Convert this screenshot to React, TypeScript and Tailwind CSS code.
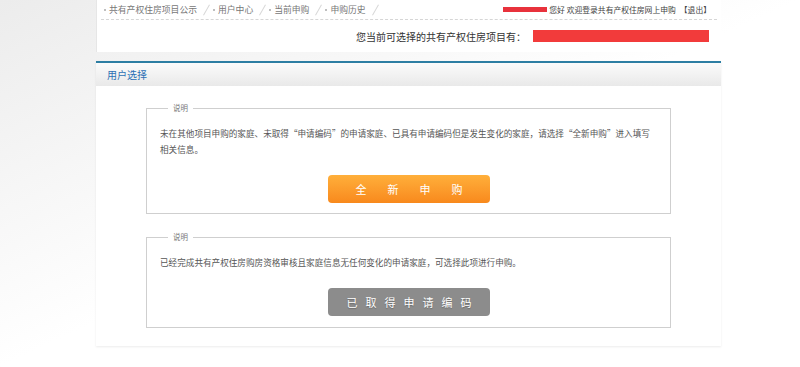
import React from "react";

// ─── Copy ─────────────────────────────────────────────────────────────────────

const navItems = ["共有产权住房项目公示", "用户中心", "当前申购", "申购历史"];

const copy = {
  welcome: "您好 欢迎登录共有产权住房网上申购",
  logout: "【退出】",
  projects: "您当前可选择的共有产权住房项目有：",
  panelTitle: "用户选择",
  legend: "说明",
  newDesc:
    "未在其他项目申购的家庭、未取得“申请编码”的申请家庭、已具有申请编码但是发生变化的家庭，请选择“全新申购”进入填写相关信息。",
  newBtn: "全新申购",
  codeDesc: "已经完成共有产权住房购房资格审核且家庭信息无任何变化的申请家庭，可选择此项进行申购。",
  codeBtn: "已取得申请编码",
};

const font = "font-['Noto_Sans_CJK_SC','Noto_Sans',sans-serif]";

// ─── Option box ───────────────────────────────────────────────────────────────

function OptionBox({ desc, button, variant, className = "" }: { desc: string; button: string; variant: "orange" | "gray"; className?: string }) {
  const btn =
    variant === "orange"
      ? "bg-gradient-to-b from-[#ffaf3a] to-[#f8891c] tracking-[21px] pl-[21px]"
      : "bg-[#8c8c8c] tracking-[8px] pl-[8px] [text-shadow:0_1px_1px_rgba(0,0,0,0.25)]";
  return (
    <fieldset className={`mx-[50px] border border-[#cfcfcf] pl-[13px] pr-[12px] ${className}`}>
      <legend className="ml-[8px] px-[5px] text-[7.5px] leading-[10px] text-[#777]">{copy.legend}</legend>
      <p className="mt-[12px] text-[8.6px] leading-[16px] text-[#555]">{desc}</p>
      <div className="mt-[18px] flex justify-center">
        <button
          className={`flex h-[28px] w-[162px] items-center justify-center rounded-[4px] text-[11px] text-white ${btn}`}
        >
          {button}
        </button>
      </div>
    </fieldset>
  );
}

// ─── Page ─────────────────────────────────────────────────────────────────────

export default function App() {
  return (
    <div className={`relative h-[367px] w-[800px] overflow-hidden bg-gradient-to-br from-[#ececec] via-white to-white ${font}`}>
      <div className="ml-[96px] w-[625px]">
        {/* Top bar */}
        <div className="h-[52px] border-l border-[#e6e6e6] bg-white">
          <div className="mx-[4px] flex h-[20px] items-center justify-between border-b border-dashed border-[#d6d6d6] pl-[3px]">
            <ul className="flex items-center text-[8.8px] text-[#777]">
              {navItems.map((item) => (
                <li key={item} className="flex items-center">
                  <span className="mr-[3px] h-[2px] w-[2px] rounded-full bg-[#aaa]" />
                  {item}
                  <span className="ml-[9px] mr-[6px] h-[12px] w-px rotate-[30deg] bg-[#d8d8d8]" />
                </li>
              ))}
            </ul>
            <div className="flex items-center pr-[6px] text-[7.8px] text-[#444]">
              <span className="mr-[2px] h-[5px] w-[44px] bg-[#e8323c]" />
              {copy.welcome}
              <span className="ml-[4px]">{copy.logout}</span>
            </div>
          </div>
          <div className="flex h-[32px] items-center justify-end pr-[12px] text-[10px] text-[#333]">
            {copy.projects}
            <span className="ml-[7px] h-[12px] w-[176px] bg-[#f23b3b]" />
          </div>
        </div>

        {/* Panel */}
        <div className="mt-[9px] h-[285px] border-t-2 border-[#2d7ea3] bg-white shadow-[0_1px_2px_rgba(0,0,0,0.08)]">
          <div className="flex h-[23px] items-center bg-gradient-to-b from-[#fbfbfb] to-[#e9e9e9] pl-[11px] text-[10px] text-[#2c6fb4]">
            {copy.panelTitle}
          </div>
          <div className="pt-[17px]">
            <OptionBox desc={copy.newDesc} button={copy.newBtn} variant="orange" className="h-[111px]" />
            <OptionBox desc={copy.codeDesc} button={copy.codeBtn} variant="gray" className="mt-[18px] h-[96px]" />
          </div>
        </div>
      </div>
    </div>
  );
}
